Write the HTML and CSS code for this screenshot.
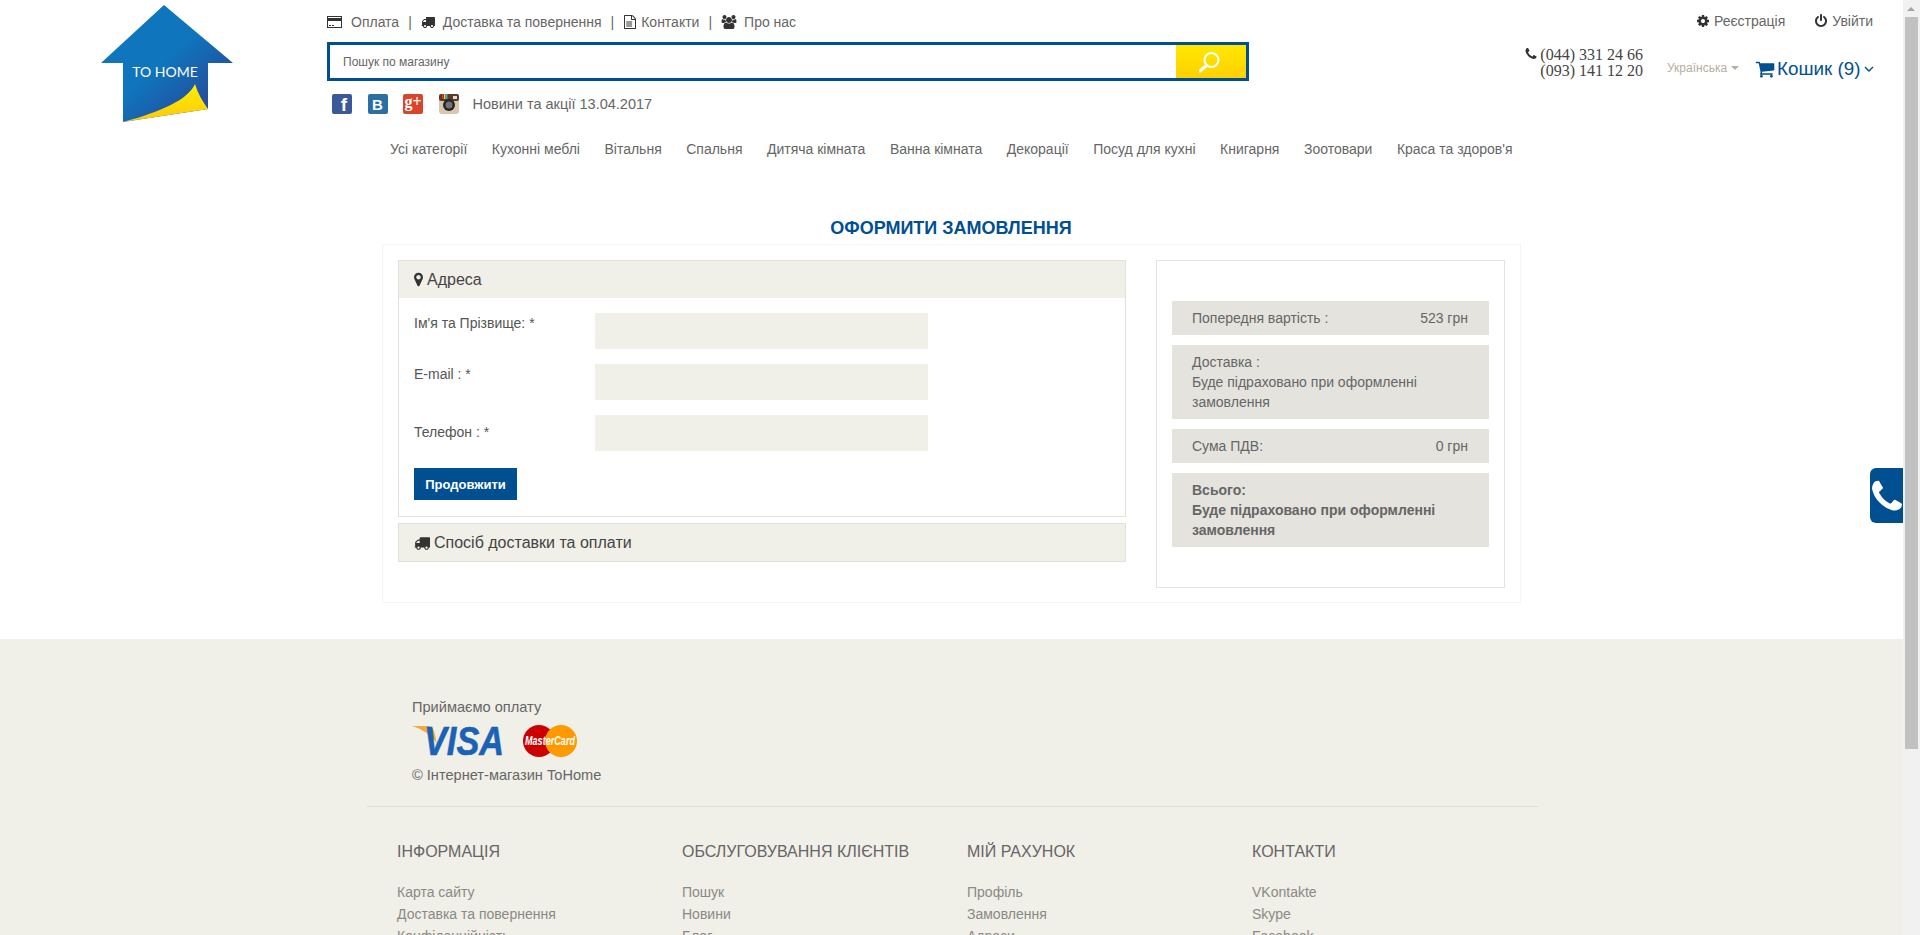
FILE: index.html
```html
<!DOCTYPE html>
<html lang="uk">
<head>
    <meta charset="UTF-8">
    <meta name="viewport" content="width=device-width, initial-scale=1.0">
    <title>Оформити замовлення</title>
    <link rel="stylesheet" href="styles.css">
</head>
<body>
    <svg class="sprite" xmlns="http://www.w3.org/2000/svg">
        <symbol id="i-truck" viewBox="0 0 1792 1792"><path d="M640 1408q0-52-38-90t-90-38-90 38-38 90 38 90 90 38 90-38 38-90zm-384-512h384v-256h-158q-13 0-22 9l-195 195q-9 9-9 22v30zm1280 512q0-52-38-90t-90-38-90 38-38 90 38 90 90 38 90-38 38-90zm256-1088v1024q0 15-4 26.5t-13.5 18.5-16.5 11.5-23.5 6-22.5 2-25.5 0-22.5-.5q0 106-75 181t-181 75-181-75-75-181h-384q0 106-75 181t-181 75-181-75-75-181h-64q-3 0-22.5.5t-25.5 0-22.5-2-23.5-6-16.5-11.5-13.5-18.5-4-26.5q0-26 19-45t45-19v-320q0-8-.5-35t0-38 2.5-34.5 6.5-37 14-30.5 22.5-30l198-198q19-19 50.5-32t58.5-13h160v-192q0-26 19-45t45-19h1024q26 0 45 19t19 45z"/></symbol>
        <symbol id="i-file" viewBox="0 0 1792 1792"><path d="M1596 380q28 28 48 76t20 88v1152q0 40-28 68t-68 28h-1344q-40 0-68-28t-28-68v-1600q0-40 28-68t68-28h896q40 0 88 20t76 48zm-444-244v376h376q-10-29-22-41l-313-313q-12-12-41-22zm384 1528v-1024h-416q-40 0-68-28t-28-68v-416h-768v1536h1280zm-1128-800q0-14 9-23t23-9h704q14 0 23 9t9 23v64q0 14-9 23t-23 9h-704q-14 0-23-9t-9-23v-64zm736 224q14 0 23 9t9 23v64q0 14-9 23t-23 9h-704q-14 0-23-9t-9-23v-64q0-14 9-23t23-9h704zm0 256q14 0 23 9t9 23v64q0 14-9 23t-23 9h-704q-14 0-23-9t-9-23v-64q0-14 9-23t23-9h704z"/></symbol>
        <symbol id="i-users" viewBox="0 0 1920 1792"><path d="M593 896q-162 5-265 128h-134q-82 0-138-40.5t-56-118.5q0-353 124-353 6 0 43.5 21t97.5 42.5 119 21.5q67 0 133-23-5 37-5 66 0 139 81 256zm1071 637q0 120-73 189.5t-194 69.5h-874q-121 0-194-69.5t-73-189.5q0-53 3.5-103.5t14-109 26.5-108.5 43-97.5 62-81 85.5-53.5 111.5-20q10 0 43 21.5t73 48 107 48 135 21.5 135-21.5 107-48 73-48 43-21.5q61 0 111.5 20t85.5 53.5 62 81 43 97.5 26.5 108.5 14 109 3.5 103.5zm-1024-1277q0 106-75 181t-181 75-181-75-75-181 75-181 181-75 181 75 75 181zm704 384q0 159-112.5 271.5t-271.5 112.5-271.5-112.5-112.5-271.5 112.5-271.5 271.5-112.5 271.5 112.5 112.5 271.5zm576 225q0 78-56 118.5t-138 40.5h-134q-103-123-265-128 81-117 81-256 0-29-5-66 66 23 133 23 59 0 119-21.5t97.5-42.5 43.5-21q124 0 124 353zm-128-609q0 106-75 181t-181 75-181-75-75-181 75-181 181-75 181 75 75 181z"/></symbol>
        <symbol id="i-cog" viewBox="0 0 1792 1792"><path d="M1152 896q0-106-75-181t-181-75-181 75-75 181 75 181 181 75 181-75 75-181zm512-109v222q0 12-8 23t-20 13l-185 28q-19 54-39 91 35 50 107 138 10 12 10 25t-9 23q-27 37-99 108t-94 71q-12 0-26-9l-138-108q-44 23-91 38-16 136-29 186-7 28-36 28h-222q-14 0-24.5-8.5t-11.5-21.5l-28-184q-49-16-90-37l-141 107q-10 9-25 9-14 0-25-11-126-114-165-168-7-10-7-23 0-12 8-23 15-21 51-66.5t54-70.5q-27-50-41-99l-183-27q-13-2-21-12.5t-8-23.5v-222q0-12 8-23t19-13l186-28q14-46 39-92-40-57-107-138-10-12-10-24 0-10 9-23 26-36 98.5-107.5t94.5-71.5q13 0 26 10l138 107q44-23 91-38 16-136 29-186 7-28 36-28h222q14 0 24.5 8.5t11.5 21.5l28 184q49 16 90 37l142-107q9-9 24-9 13 0 25 10 129 119 165 170 7 8 7 22 0 12-8 23-15 21-51 66.5t-54 70.5q26 50 41 98l183 28q13 2 21 12.5t8 23.5z"/></symbol>
        <symbol id="i-power" viewBox="0 0 1792 1792"><path d="M1664 896q0 156-61 298t-164 245-245 164-298 61-298-61-245-164-164-245-61-298q0-182 80.5-343t226.5-270q43-32 95.5-25t83.5 50q32 42 24.5 94.5t-49.5 84.5q-98 74-151.5 181t-53.5 228q0 104 40.5 198.5t109.5 163.5 163.5 109.5 198.5 40.5 198.5-40.5 163.5-109.5 109.5-163.5 40.5-198.5q0-121-53.5-228t-151.5-181q-42-32-49.5-84.5t24.5-94.5q31-43 84-50t95 25q146 109 226.5 270t80.5 343zm-640-768v640q0 52-38 90t-90 38-90-38-38-90v-640q0-52 38-90t90-38 90 38 38 90z"/></symbol>
        <symbol id="i-phone" viewBox="0 0 1792 1792"><path d="M1600 1240q0 27-10 70.5t-21 68.5q-21 50-122 106-94 51-186 51-27 0-53-3.5t-57.5-12.5-47-14.5-55.5-20.5-49-18q-98-35-175-83-127-79-264-216t-216-264q-48-77-83-175-3-9-18-49t-20.5-55.5-14.5-47-12.5-57.5-3.5-53q0-92 51-186 56-101 106-122 25-11 68.5-21t70.5-10q14 0 21 3 18 6 53 76 11 19 30 54t35 63.5 31 53.5q3 4 17.5 25t21.5 35.5 7 28.5q0 20-28.5 50t-62 55-62 53-28.5 46q0 9 5 22.5t8.5 20.5 14 24 11.5 19q76 137 174 235t235 174q2 1 19 11.5t24 14 20.5 8.5 22.5 5q18 0 46-28.5t53-62 55-62 50-28.5q14 0 28.5 7t35.5 21.5 25 17.5q25 15 53.5 31t63.5 35 54 30q70 35 76 53 3 7 3 21z"/></symbol>
        <symbol id="i-cart" viewBox="0 0 1792 1792"><path d="M704 1536q0 52-38 90t-90 38-90-38-38-90 38-90 90-38 90 38 38 90zm896 0q0 52-38 90t-90 38-90-38-38-90 38-90 90-38 90 38 38 90zm128-1088v512q0 24-16.5 42.5t-40.5 21.5l-1044 122q13 60 13 70 0 16-24 64h920q26 0 45 19t19 45-19 45-45 19h-1024q-26 0-45-19t-19-45q0-11 8-31.5t16-36 21.5-40 15.5-29.5l-177-823h-204q-26 0-45-19t-19-45 19-45 45-19h256q16 0 28.5 6.5t19.5 15.5 13 24.5 8 26 5.5 29.5 4.5 26h1201q26 0 45 19t19 45z"/></symbol>
        <symbol id="i-marker" viewBox="384 128 1024 1536"><path d="M1152 640q0-106-75-181t-181-75-181 75-75 181 75 181 181 75 181-75 75-181zm256 0q0 109-33 179l-364 774q-16 33-47.5 52t-67.5 19-67.5-19-46.5-52l-365-774q-33-70-33-179 0-212 150-362t362-150 362 150 150 362z"/></symbol>
    </svg>

    <div class="page">
        <header class="site-header">
            <a class="logo" href="#">
                <svg width="134" height="122" viewBox="0 0 134 122">
                    <defs>
                        <linearGradient id="logoBlue" x1="0.35" y1="0.6" x2="0.75" y2="1">
                            <stop offset="0" stop-color="#0f75bc"/>
                            <stop offset="1" stop-color="#27479a"/>
                        </linearGradient>
                        <linearGradient id="logoYellow" x1="0" y1="0" x2="0" y2="1">
                            <stop offset="0" stop-color="#fff000"/>
                            <stop offset="1" stop-color="#fdc70c"/>
                        </linearGradient>
                    </defs>
                    <polygon points="64,1 1,59 23,59 23,118 108,105 108,59 133,59" fill="url(#logoBlue)"/>
                    <path d="M23 118 C60 108 88 96 95 80 C98 90 103 98 108 105 Z" fill="url(#logoYellow)"/>
                    <text class="logo-text" x="65" y="73" text-anchor="middle">TO HOME</text>
                </svg>
            </a>
            <div class="header-center">
                <ul class="top-links">
                    <li>
                        <svg class="card-icon" width="15" height="12" viewBox="0 0 15 12"><rect x="0.5" y="0.5" width="14" height="11" fill="none" stroke="#333"/><rect x="1" y="2" width="13" height="3" fill="#333"/><rect x="2" y="9" width="2" height="1" fill="#333"/><rect x="5" y="9" width="2" height="1" fill="#333"/></svg>
                        <a href="#">Оплата</a>
                    </li>
                    <li><svg class="icon truck-icon" width="14" height="14"><use href="#i-truck"/></svg><a href="#">Доставка та повернення</a></li>
                    <li><svg class="icon file-icon" width="14" height="14"><use href="#i-file"/></svg><a href="#">Контакти</a></li>
                    <li><svg class="icon users-icon" width="16" height="14"><use href="#i-users"/></svg><a href="#">Про нас</a></li>
                </ul>
                <form class="search">
                    <input class="search-input" type="text" placeholder="Пошук по магазину">
                    <button class="search-btn" type="button" aria-label="Пошук">
                        <svg width="24" height="24" viewBox="0 0 24 24" fill="none" stroke="#fff" stroke-linecap="round"><circle cx="12.5" cy="10" r="7" stroke-width="2"/><line x1="7.5" y1="15.5" x2="1" y2="21" stroke-width="3"/></svg>
                    </button>
                </form>
                <div class="social-row">
                    <a class="social fb" href="#">f</a>
                    <a class="social vk" href="#">B</a>
                    <a class="social gp" href="#">g+</a>
                    <a class="social ig" href="#">
                        <svg width="20" height="20" viewBox="0 0 20 20">
                            <rect width="20" height="20" rx="3" fill="#d8c8ae"/>
                            <rect width="20" height="7" rx="2" fill="#5d3a28"/>
                            <rect x="3" y="0" width="1.5" height="5" fill="#d33"/>
                            <rect x="5" y="0" width="1.5" height="5" fill="#dd3"/>
                            <rect x="7" y="0" width="1.5" height="5" fill="#3ad"/>
                            <circle cx="10" cy="11" r="6" fill="#2a2420"/>
                            <circle cx="10" cy="11" r="3.5" fill="#6c7480"/>
                            <rect x="14" y="2" width="4" height="3" fill="#ddd"/>
                        </svg>
                    </a>
                    <a class="news-link" href="#">Новини та акції 13.04.2017</a>
                </div>
            </div>
            <div class="header-right">
                <div class="account">
                    <a href="#"><svg class="icon" width="14" height="14"><use href="#i-cog"/></svg>Реєстрація</a>
                    <a href="#"><svg class="icon" width="14" height="14"><use href="#i-power"/></svg>Увійти</a>
                </div>
                <div class="shop-row">
                    <div class="phones">
                        <svg class="icon" width="14" height="14"><use href="#i-phone"/></svg>(044) 331 24 66<br>(093) 141 12 20
                    </div>
                    <a class="lang" href="#">Українська<span class="caret"></span></a>
                    <a class="cart" href="#">
                        <svg width="20" height="20"><use href="#i-cart"/></svg>Кошик (9)
                        <svg class="chev" width="10" height="7" viewBox="0 0 10 7" fill="none" stroke="#004f91" stroke-width="1.4"><polyline points="1,1 5,5 9,1"/></svg>
                    </a>
                </div>
            </div>
        </header>

        <nav class="main-nav">
            <a href="#">Усі категорії</a>
            <a href="#">Кухонні меблі</a>
            <a href="#">Вітальня</a>
            <a href="#">Спальня</a>
            <a href="#">Дитяча кімната</a>
            <a href="#">Ванна кімната</a>
            <a href="#">Декорації</a>
            <a href="#">Посуд для кухні</a>
            <a href="#">Книгарня</a>
            <a href="#">Зоотовари</a>
            <a href="#">Краса та здоров'я</a>
        </nav>

        <main class="checkout">
            <h1 class="checkout-title">ОФОРМИТИ ЗАМОВЛЕННЯ</h1>
            <div class="checkout-box">
                <div class="checkout-left">
                    <section class="panel">
                        <h2 class="panel-head"><svg class="icon" width="9" height="15"><use href="#i-marker"/></svg>Адреса</h2>
                        <div class="panel-body">
                            <div class="field field-name">
                                <label>Ім'я та Прізвище: *</label>
                                <input type="text">
                            </div>
                            <div class="field field-mail">
                                <label>E-mail : *</label>
                                <input type="text">
                            </div>
                            <div class="field field-phone">
                                <label>Телефон : *</label>
                                <input type="text">
                            </div>
                            <button class="btn-next" type="button">Продовжити</button>
                        </div>
                    </section>
                    <section class="panel panel-closed">
                        <h2 class="panel-head"><svg class="icon" width="16" height="16"><use href="#i-truck"/></svg>Спосіб доставки та оплати</h2>
                    </section>
                </div>
                <aside class="summary">
                    <div class="sum-row sum-split"><span>Попередня вартість :</span><span>523 грн</span></div>
                    <div class="sum-row">Доставка :<br>Буде підраховано при оформленні замовлення</div>
                    <div class="sum-row sum-split"><span>Сума ПДВ:</span><span>0 грн</span></div>
                    <div class="sum-row sum-total">Всього:<br>Буде підраховано при оформленні замовлення</div>
                </aside>
            </div>
        </main>

        <footer class="site-footer">
            <div class="pay">
                <p class="pay-title">Приймаємо оплату</p>
                <div class="pay-logos">
                    <svg class="visa" width="94" height="32" viewBox="0 0 94 32">
                        <path d="M0 1 H15 C19 1 21 3 22 6 L25 19 C20 10 10 4 0 1 Z" fill="#f4a93a"/>
                        <text class="visa-text" x="92" y="30" text-anchor="end" textLength="80" lengthAdjust="spacingAndGlyphs">VISA</text>
                    </svg>
                    <svg class="mc" width="54" height="32" viewBox="0 0 54 32">
                        <circle cx="16" cy="16" r="16" fill="#cc0000"/>
                        <circle cx="38" cy="16" r="16" fill="#ff9900"/>
                        <text class="mc-text" x="27" y="20" text-anchor="middle" textLength="50" lengthAdjust="spacingAndGlyphs">MasterCard</text>
                    </svg>
                </div>
                <p class="copy">© Інтернет-магазин ToHome</p>
            </div>
            <div class="footer-cols">
                <div class="f-col">
                    <h3>ІНФОРМАЦІЯ</h3>
                    <a href="#">Карта сайту</a>
                    <a href="#">Доставка та повернення</a>
                    <a href="#">Конфіденційність</a>
                </div>
                <div class="f-col">
                    <h3>ОБСЛУГОВУВАННЯ КЛІЄНТІВ</h3>
                    <a href="#">Пошук</a>
                    <a href="#">Новини</a>
                    <a href="#">Блог</a>
                </div>
                <div class="f-col">
                    <h3>МІЙ РАХУНОК</h3>
                    <a href="#">Профіль</a>
                    <a href="#">Замовлення</a>
                    <a href="#">Адреси</a>
                </div>
                <div class="f-col">
                    <h3>КОНТАКТИ</h3>
                    <a href="#">VKontakte</a>
                    <a href="#">Skype</a>
                    <a href="#">Facebook</a>
                </div>
            </div>
        </footer>
    </div>

    <a class="call-btn" href="#" aria-label="Подзвонити"><svg width="38" height="38"><use href="#i-phone"/></svg></a>

    <div class="scrollbar">
        <span class="scroll-arrow"></span>
        <span class="scroll-thumb"></span>
    </div>
</body>
</html>
```

FILE: styles.css
```css
html, body {
    margin: 0;
    height: 935px;
    overflow: hidden;
}

body {
    font-family: "Liberation Sans", Arial, sans-serif;
    font-size: 14px;
    color: #666;
    background: #fff;
}

a {
    color: inherit;
    text-decoration: none;
}

.sprite {
    display: none;
}

.icon {
    fill: #333;
    flex: none;
}

.page {
    width: 1903px;
}

/* header */
.site-header {
    display: flex;
    height: 137px;
}

.logo {
    display: block;
    width: 227px;
    padding: 4px 0 0 100px;
    box-sizing: content-box;
}

.logo svg {
    display: block;
}

.logo-text {
    font-family: Lato, sans-serif;
    font-weight: 400;
    font-size: 14px;
    fill: #fff;
}

.header-center {
    width: 922px;
    padding-top: 12px;
}

.top-links {
    display: flex;
    list-style: none;
    margin: 0;
    padding: 0;
    height: 20px;
    line-height: 20px;
}

.top-links li {
    display: flex;
    align-items: center;
}

.top-links li + li::before {
    content: "|";
    margin: 0 9px;
}

.top-links svg {
    margin-right: 9px;
}

.top-links .truck-icon {
    margin-right: 8px;
}

.top-links .file-icon {
    margin-right: 4px;
}

.top-links .users-icon {
    margin-right: 7px;
}

.search {
    display: flex;
    height: 39px;
    margin-top: 10px;
    border: 3px solid #004f91;
    box-sizing: border-box;
}

.search-input {
    flex: 1;
    border: 0;
    outline: 0;
    padding: 0 13px;
    font-family: inherit;
    font-size: 12px;
    color: #666;
}

.search-input::placeholder {
    color: #666;
    opacity: 1;
}

.search-btn {
    display: flex;
    align-items: center;
    justify-content: center;
    width: 70px;
    padding: 0;
    border: 0;
    background: linear-gradient(#ffe800, #ffd000);
}

.social-row {
    display: flex;
    align-items: center;
    height: 20px;
    margin-top: 13px;
    padding-left: 5px;
}

.social {
    display: block;
    width: 20px;
    height: 20px;
    margin-right: 15.5px;
    border-radius: 2px;
    color: #fff;
    font-weight: bold;
    text-align: center;
    line-height: 21px;
}

.social.ig {
    margin-right: 14px;
}

.social svg {
    display: block;
}

.fb {
    background: #3b5998;
    font-size: 19px;
    text-indent: 4px;
    line-height: 22px;
}

.vk {
    background: #2b6fa5;
    font-size: 15px;
}

.gp {
    background: #d8452b;
    font-size: 16px;
    line-height: 16px;
    font-family: "Liberation Serif", serif;
}

.news-link {
    font-size: 14.5px;
}

.header-right {
    width: 349px;
    margin-left: 275px;
    padding-top: 11px;
}

.account {
    display: flex;
    justify-content: flex-end;
    gap: 29px;
    font-size: 14px;
    line-height: 20px;
}

.account a {
    display: flex;
    align-items: center;
    gap: 4px;
}

.shop-row {
    display: flex;
    align-items: flex-start;
    margin-top: 16px;
    white-space: nowrap;
}

.phones {
    flex: none;
    width: 119px;
    font-family: "Liberation Serif", serif;
    font-size: 16px;
    line-height: 16px;
    color: #444;
    text-align: right;
}

.phones .icon {
    margin-right: 2px;
    vertical-align: -1px;
}

.lang {
    flex: none;
    margin: 11px 0 0 24px;
    font-size: 12px;
    line-height: 20px;
    color: #b5aea3;
}

.caret {
    display: inline-block;
    margin-left: 4px;
    vertical-align: 2px;
    border-top: 4px solid #b5aea3;
    border-left: 4px solid transparent;
    border-right: 4px solid transparent;
}

.cart {
    display: flex;
    flex: none;
    align-items: center;
    gap: 2px;
    margin: 11px 0 0 16px;
    font-size: 18.8px;
    line-height: 22px;
    color: #004f91;
}

.cart svg {
    fill: #004f91;
    flex: none;
}

.cart .chev {
    fill: none;
    margin-left: 2px;
}

/* nav */
.main-nav {
    display: flex;
    gap: 24.5px;
    height: 26px;
    padding-left: 390px;
    line-height: 24px;
}

/* checkout */
.checkout {
    width: 1139px;
    margin-left: 382px;
}

.checkout-title {
    margin: 55px 0 0;
    font-size: 18px;
    line-height: 20px;
    color: #004f91;
    text-align: center;
    padding-right: 1px;
}

.checkout-box {
    display: flex;
    height: 359px;
    margin-top: 6px;
    padding: 15px 15px 0;
    border: 1px solid #f5f5f0;
    box-sizing: border-box;
}

.checkout-left {
    width: 728px;
}

.panel {
    border: 1px solid #e0e0dc;
}

.panel-closed {
    margin-top: 6px;
}

.panel-head {
    display: flex;
    align-items: center;
    gap: 4px;
    height: 37px;
    margin: 0;
    padding-left: 15px;
    font-weight: normal;
    font-size: 16px;
    color: #444;
    background: #f0efe8;
}

.panel-body {
    height: 218px;
    padding: 15px 15px 0;
    box-sizing: border-box;
}

.field {
    display: flex;
    margin-bottom: 15px;
}

.field label {
    width: 181px;
    color: #555;
    font-size: 14px;
    line-height: 20px;
}

.field input {
    width: 333px;
    height: 36px;
    padding: 0;
    border: 0;
    background: #f0efe8;
}

.field-phone label {
    padding-top: 7px;
}

.btn-next {
    display: block;
    width: 103px;
    height: 32px;
    margin-top: 17px;
    padding: 0;
    border: 0;
    background: #004f91;
    color: #fff;
    font-family: inherit;
    font-size: 13px;
    font-weight: bold;
}

.summary {
    width: 349px;
    height: 328px;
    margin-left: 30px;
    padding: 40px 15px 0;
    border: 1px solid #e3e3e3;
    box-sizing: border-box;
}

.sum-row {
    margin-bottom: 10px;
    padding: 7px 20px;
    background: #e4e3de;
    line-height: 20px;
}

.sum-split {
    display: flex;
    justify-content: space-between;
    padding-right: 21px;
}

.sum-total {
    font-weight: bold;
}

/* footer */
.site-footer {
    height: 300px;
    margin-top: 36px;
    background: #f0efe8;
}

.pay {
    height: 168px;
    margin: 0 365px 0 367px;
    padding: 58px 0 0 45px;
    border-bottom: 1px solid #dfdfd9;
    box-sizing: border-box;
}

.pay p {
    margin: 0;
    font-size: 14.6px;
    line-height: 20px;
}

.pay-logos {
    display: flex;
    align-items: center;
    gap: 17px;
    margin: 8px 0;
}

.pay-logos svg {
    display: block;
    overflow: visible;
}

.visa-text {
    font-size: 40px;
    font-weight: bold;
    font-style: italic;
    fill: #1a63b4;
    stroke: #1a63b4;
    stroke-width: 0.6px;
}

.mc-text {
    font-size: 12px;
    font-weight: bold;
    font-style: italic;
    fill: #fff;
}

.footer-cols {
    display: flex;
    padding: 35px 0 0 397px;
}

.f-col {
    width: 285px;
}

.f-col h3 {
    margin: 0 0 19px;
    font-size: 16px;
    font-weight: normal;
    line-height: 20px;
}

.f-col a {
    display: block;
    color: #8a8a85;
    line-height: 22px;
}

/* over the page */
.call-btn {
    position: fixed;
    left: 1870px;
    top: 468px;
    width: 33px;
    height: 55px;
    overflow: hidden;
    background: #004f91;
    border-radius: 6px 0 0 6px;
}

.call-btn svg {
    display: block;
    margin: 10px 0 0 -2px;
    fill: #fff;
}

.scrollbar {
    position: fixed;
    right: 0;
    top: 0;
    width: 17px;
    height: 935px;
    background: #f1f1f1;
}

.scroll-arrow {
    position: absolute;
    left: 4px;
    top: 7px;
    border-bottom: 4px solid #a3a3a3;
    border-left: 4.5px solid transparent;
    border-right: 4.5px solid transparent;
}

.scroll-thumb {
    position: absolute;
    left: 2px;
    top: 17px;
    width: 13px;
    height: 732px;
    background: #c1c1c1;
}
```
